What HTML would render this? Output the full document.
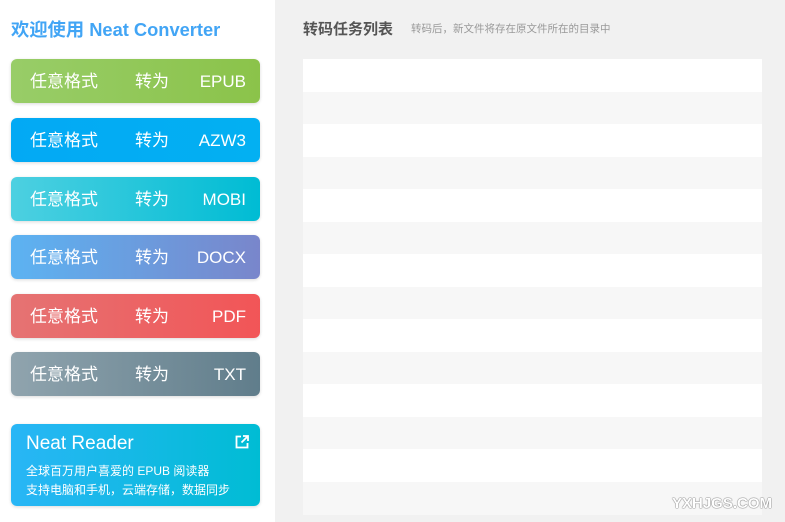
<!DOCTYPE html>
<html><head><meta charset="utf-8"><style>
*{margin:0;padding:0;box-sizing:border-box}
body{width:785px;height:522px;overflow:hidden;background:#f1f1f1;font-family:"Liberation Sans","Noto Sans CJK SC",sans-serif;position:relative}
.left{position:absolute;left:0;top:0;width:275px;height:522px;background:#fff}
h1{position:absolute;left:11px;top:16px;font-size:18.3px;color:#42a5f5;font-weight:bold;white-space:nowrap}
.btn{position:absolute;left:11px;width:249px;height:44px;border-radius:6px;color:#fff;font-size:17px;box-shadow:0 1px 3px rgba(0,0,0,.15)}
.btn span{position:absolute;top:12px;line-height:22px}
.a{left:19px}.b{left:124px}.c{right:14px}
.card{position:absolute;left:11px;top:424px;width:249px;height:82px;border-radius:6px;background:linear-gradient(90deg,#29b6f6,#00bcd4);color:#fff;box-shadow:0 1px 3px rgba(0,0,0,.15)}
.title{position:absolute;left:303px;top:18px;font-size:15px;font-weight:bold;color:#555}
.sub{position:absolute;left:411px;top:21px;font-size:10.5px;color:#999}
.row{position:absolute;left:303px;width:459px;height:33px}
</style></head><body>
<div class="left">
<h1>欢迎使用 Neat Converter</h1>
<div class="btn" style="top:59px;background:linear-gradient(90deg,#98cd68,#8bc34a)"><span class="a">任意格式</span><span class="b">转为</span><span class="c">EPUB</span></div>
<div class="btn" style="top:118px;background:linear-gradient(90deg,#03a9f4,#03b0f2)"><span class="a">任意格式</span><span class="b">转为</span><span class="c">AZW3</span></div>
<div class="btn" style="top:177px;background:linear-gradient(90deg,#4dd0e1,#00bcd4)"><span class="a">任意格式</span><span class="b">转为</span><span class="c">MOBI</span></div>
<div class="btn" style="top:235px;background:linear-gradient(90deg,#5cb3f2,#7986cb)"><span class="a">任意格式</span><span class="b">转为</span><span class="c">DOCX</span></div>
<div class="btn" style="top:294px;background:linear-gradient(90deg,#e57373,#f25557)"><span class="a">任意格式</span><span class="b">转为</span><span class="c">PDF</span></div>
<div class="btn" style="top:352px;background:linear-gradient(90deg,#90a4ae,#607d8b)"><span class="a">任意格式</span><span class="b">转为</span><span class="c">TXT</span></div>
<div class="card">
<div style="position:absolute;left:15px;top:9px;font-size:19px">Neat Reader</div>
<svg style="position:absolute;right:11px;top:11px" width="14" height="14" viewBox="0 0 14 14" fill="none" stroke="#fff" stroke-width="1.8"><path d="M6 1.5H1.5v11h11V8"/><path d="M8 1h5v5M13 1L6.5 7.5"/></svg>
<div style="position:absolute;left:15px;top:38px;font-size:12px;line-height:19px">全球百万用户喜爱的 EPUB 阅读器<br>支持电脑和手机，云端存储，数据同步</div>
</div>
</div>
<div class="title">转码任务列表</div>
<div class="sub">转码后，新文件将存在原文件所在的目录中</div>
<div class="row" style="top:59px;background:#fff"></div>
<div class="row" style="top:92px;background:#f7f7f7"></div>
<div class="row" style="top:124px;background:#fff"></div>
<div class="row" style="top:157px;background:#f7f7f7"></div>
<div class="row" style="top:189px;background:#fff"></div>
<div class="row" style="top:222px;background:#f7f7f7"></div>
<div class="row" style="top:254px;background:#fff"></div>
<div class="row" style="top:287px;background:#f7f7f7"></div>
<div class="row" style="top:319px;background:#fff"></div>
<div class="row" style="top:352px;background:#f7f7f7"></div>
<div class="row" style="top:384px;background:#fff"></div>
<div class="row" style="top:417px;background:#f7f7f7"></div>
<div class="row" style="top:449px;background:#fff"></div>
<div class="row" style="top:482px;background:#f7f7f7;height:33px"></div>
<div style="position:absolute;left:672px;top:495px;font-size:15px;color:#fff;font-weight:bold;text-shadow:0 0 1px #555,0 0 1px #555">YXHJGS.COM</div>
</body></html>
